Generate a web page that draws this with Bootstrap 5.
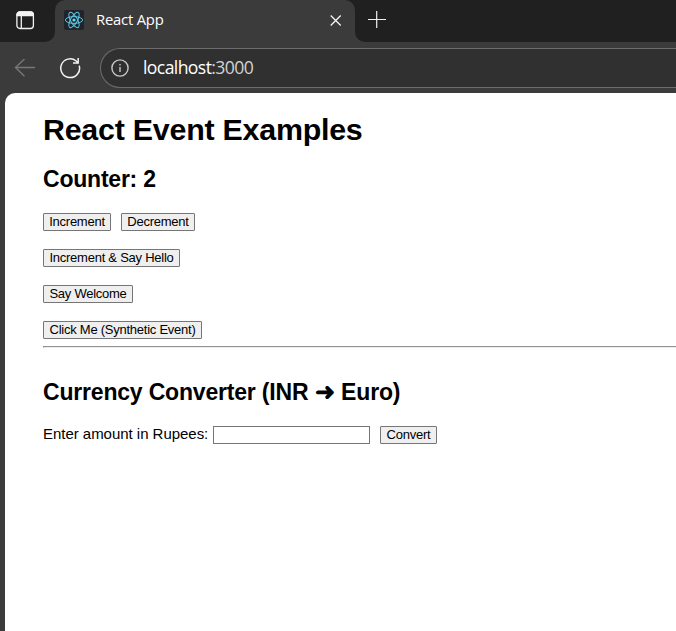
<!DOCTYPE html>
<html lang="en">
<head>
<meta charset="utf-8">
<title>React App</title>
<link href="https://cdn.jsdelivr.net/npm/bootstrap@5.3.0/dist/css/bootstrap.min.css" rel="stylesheet">
<style>
body{background:#3b3b3b;color:#000;width:676px;height:631px;font-family:"Liberation Sans",Arial,sans-serif;font-size:15px}
svg{display:block;flex:none}
.tabstrip{height:42px;background:#3b3b3b}
.tab-left{width:55px;background:#202020;border-bottom-right-radius:10px;padding:0 0 2px 16px}
.tab-back{background:linear-gradient(#202020 20px,#3b3b3b 20px)}
.tab-active{width:300px;padding:0 13px 2px 9px;color:#fff;background:#3b3b3b;border-radius:10px 10px 0 0}
.tab-right{background:#202020;border-bottom-left-radius:10px;padding:0 0 3px 13px}
.tab-title{font:14.8px/20px "Open Sans","Noto Sans",sans-serif;letter-spacing:-.2px;margin-left:12px;padding-bottom:2px}
.toolbar-row{height:51px;padding:6px 0 5px 14px}
.address{height:40px;margin-left:19px;margin-right:-1px;border:1px solid #6d6d6d;border-right:0;border-radius:20px 0 0 20px;background:#303030;padding-left:10px}
.address-text{font:17.6px/24px "Open Sans","Noto Sans",sans-serif;letter-spacing:-.6px;color:#fff;margin-left:14px;padding-bottom:2px}
.address-port{color:#d2d2d2}
.page{margin-left:5px;background:#fff;border-top-left-radius:10px;padding-left:38px}
h1{font-size:30.4px;font-weight:700;line-height:34px;letter-spacing:-.24px;margin:19px 0 0}
h2{font-size:23px;font-weight:700;line-height:26px;margin:0}
.counter-title{margin-top:20px;letter-spacing:-.22px}
.native-btn{height:18px;padding:0 5px;border:1px solid #767676;border-radius:1px;background:#efefef;color:#000;font-size:13px;line-height:16px;letter-spacing:-.25px;white-space:nowrap}
.btn-inc,.btn-convert{padding:0}
.btn-inc{width:68px}
.btn-dec{width:74px}
.btn-hello{width:137px;padding:0}
.btn-welcome{width:90px;padding:0}
.btn-event{width:159px;padding:0}
.btn-convert{width:57px}
.actions{margin-top:21px;gap:18px}
.pair{gap:10px}
.rule{height:2px;border-top:1px solid #929292;border-left:1px solid #929292;border-bottom:1px solid #ededed;margin-top:7px}
.converter-title{margin-top:31px;letter-spacing:-.19px}
.arrow{font-size:24px;line-height:1;letter-spacing:.4px}
.amount-row{margin-top:21px;height:18px}
.amount-label{width:170px;padding-bottom:1px;letter-spacing:-.03px;white-space:nowrap}
.amount{width:157px;height:18px;border:1px solid #767676;border-radius:0;padding:1px 2px;margin:0 10px 0 0}
</style>
<script src="https://cdn.jsdelivr.net/npm/bootstrap@5.3.0/dist/js/bootstrap.bundle.min.js"></script>
</head>
<body class="d-flex flex-column overflow-hidden m-0">
<header class="flex-shrink-0">
<div class="tabstrip d-flex">
<div class="tab-left d-flex align-items-center flex-shrink-0">
<svg width="19" height="19" viewBox="0 0 19 19" fill="none" stroke="#f3f3f3" stroke-width="1.3"><rect x=".9" y="1" width="16.5" height="16.5" rx="3"/><path d="M1 4.2V3.5Q1 1 4 1H14.5Q17.3 1 17.3 4V4.5H1Z" fill="#f3f3f3"/><path d="M5.3 5V17"/></svg>
</div>
<div class="tab-back flex-shrink-0"><div class="tab-active h-100 d-flex align-items-center">
<svg width="20" height="20" viewBox="0 0 20 20"><rect width="20" height="20" rx="2" fill="#20232a"/><g fill="none" stroke="#5ac8e4" stroke-width="1"><ellipse cx="10" cy="10" rx="8.6" ry="3.4"/><ellipse cx="10" cy="10" rx="8.6" ry="3.4" transform="rotate(60 10 10)"/><ellipse cx="10" cy="10" rx="8.6" ry="3.4" transform="rotate(120 10 10)"/></g><circle cx="10" cy="10" r="1.6" fill="#61dafb"/></svg>
<span class="tab-title">React App</span>
<svg class="ms-auto" width="12" height="12" viewBox="0 0 12 12" stroke="#f3f3f3" stroke-width="1.3"><path d="M.7 1.5 10.7 11.5M10.7 1.5.7 11.5"/></svg>
</div></div>
<div class="tab-right flex-grow-1 d-flex align-items-center">
<svg width="18" height="18" viewBox="0 0 18 18" stroke="#f0f0f0" stroke-width="1.2"><path d="M0 8.5H18M8.7 0V17"/></svg>
</div>
</div>
<div class="toolbar-row d-flex align-items-center">
<svg width="21" height="19" viewBox="0 0 21 19" fill="none" stroke="#777" stroke-width="1.4"><path d="M21 8.5H1.5M10.5 0 1.5 8.5 10.5 17.3"/></svg>
<svg class="ms-4" width="22" height="22" viewBox="0 0 22 22" fill="none" stroke="#f3f3f3" stroke-width="1.5"><path d="M20.2 8.6A9.4 9.4 0 1 1 17.2 4L19.2 6M19.2 1V6.1H14"/></svg>
<div class="address flex-grow-1 d-flex align-items-center">
<svg width="18" height="18" viewBox="0 0 18 18" fill="none" stroke="#c8c8c8" stroke-width="1.4"><circle cx="9" cy="9" r="8.1"/><path d="M9 8V13M9 5V6.6"/></svg>
<div class="address-text">localhost<span class="address-port">:3000</span></div>
</div>
</div>
</header>
<main class="page flex-grow-1">
<h1>React Event Examples</h1>
<h2 class="counter-title">Counter: 2</h2>
<div class="actions d-flex flex-column align-items-start">
<div class="pair d-flex"><button class="native-btn btn-inc">Increment</button><button class="native-btn btn-dec">Decrement</button></div>
<button class="native-btn btn-hello">Increment &amp; Say Hello</button>
<button class="native-btn btn-welcome">Say Welcome</button>
<button class="native-btn btn-event">Click Me (Synthetic Event)</button>
</div>
<div class="rule"></div>
<h2 class="converter-title">Currency Converter (INR <span class="arrow">➜</span> Euro)</h2>
<div class="amount-row d-flex align-items-center">
<label class="amount-label" for="amount">Enter amount in Rupees:</label><input id="amount" class="amount" type="text"><button class="native-btn btn-convert">Convert</button>
</div>
</main>
</body>
</html>
